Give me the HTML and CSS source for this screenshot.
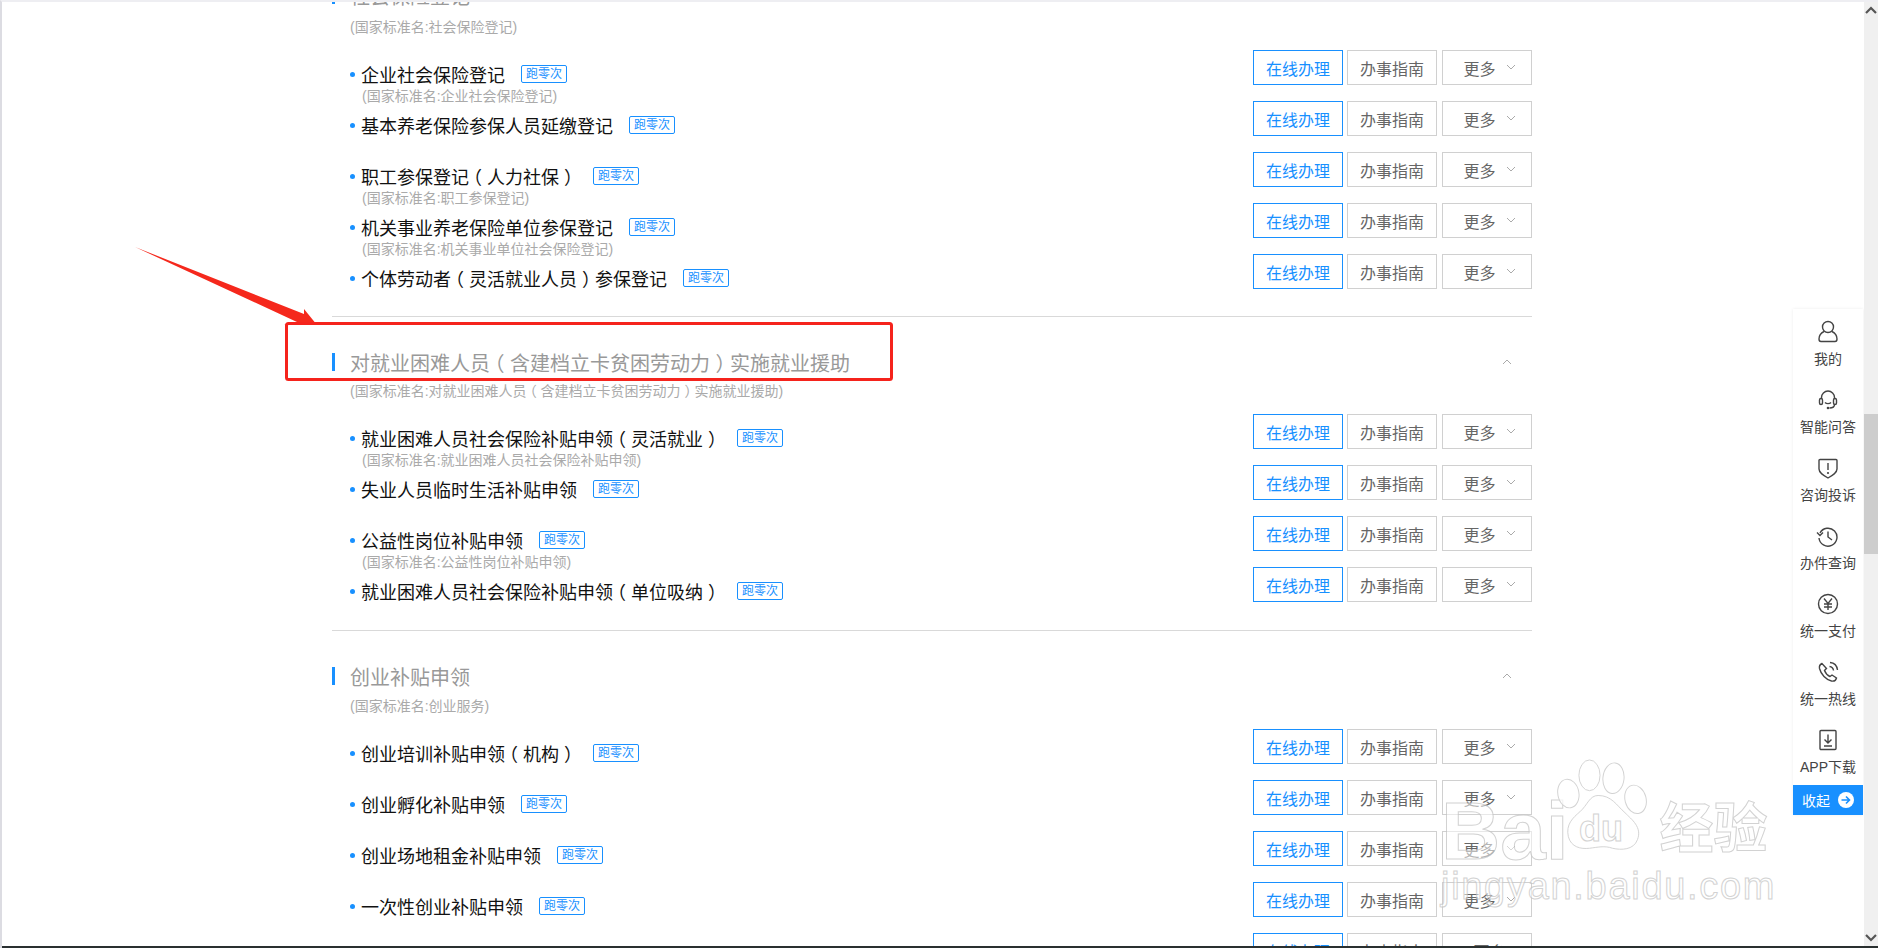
FILE: index.html
```html
<!DOCTYPE html>
<html lang="zh-CN">
<head>
    <meta charset="UTF-8">
    <title>办事服务</title>
    <link rel="stylesheet" href="styles.css">
</head>
<body>
    <div class="window">
        <div class="viewport">
            <div class="list">
                <!-- 社会保险登记 -->
                <section class="group first">
                    <div class="group-head"><h2>社会保险登记</h2></div>
                    <p class="group-sub">(国家标准名:社会保险登记)</p>
                    <div class="row"><div class="row-text"><div class="row-name"><a>企业社会保险登记</a><span class="tag">跑零次</span></div><p class="row-sub">(国家标准名:企业社会保险登记)</p></div><div class="btns"><span class="btn primary">在线办理</span><span class="btn">办事指南</span><span class="btn more">更多<svg class="chev" viewBox="0 0 10 6"><path d="M1 1l4 4 4-4"/></svg></span></div></div>
                    <div class="row"><div class="row-text"><div class="row-name"><a>基本养老保险参保人员延缴登记</a><span class="tag">跑零次</span></div></div><div class="btns"><span class="btn primary">在线办理</span><span class="btn">办事指南</span><span class="btn more">更多<svg class="chev" viewBox="0 0 10 6"><path d="M1 1l4 4 4-4"/></svg></span></div></div>
                    <div class="row"><div class="row-text"><div class="row-name"><a>职工参保登记<i class="par-l">（</i>人力社保<i class="par-r">）</i></a><span class="tag">跑零次</span></div><p class="row-sub">(国家标准名:职工参保登记)</p></div><div class="btns"><span class="btn primary">在线办理</span><span class="btn">办事指南</span><span class="btn more">更多<svg class="chev" viewBox="0 0 10 6"><path d="M1 1l4 4 4-4"/></svg></span></div></div>
                    <div class="row"><div class="row-text"><div class="row-name"><a>机关事业养老保险单位参保登记</a><span class="tag">跑零次</span></div><p class="row-sub">(国家标准名:机关事业单位社会保险登记)</p></div><div class="btns"><span class="btn primary">在线办理</span><span class="btn">办事指南</span><span class="btn more">更多<svg class="chev" viewBox="0 0 10 6"><path d="M1 1l4 4 4-4"/></svg></span></div></div>
                    <div class="row"><div class="row-text"><div class="row-name"><a>个体劳动者<i class="par-l">（</i>灵活就业人员<i class="par-r">）</i>参保登记</a><span class="tag">跑零次</span></div></div><div class="btns"><span class="btn primary">在线办理</span><span class="btn">办事指南</span><span class="btn more">更多<svg class="chev" viewBox="0 0 10 6"><path d="M1 1l4 4 4-4"/></svg></span></div></div>
                </section>

                <!-- 就业援助 -->
                <section class="group">
                    <div class="group-head"><h2>对就业困难人员<i class="par-l">（</i>含建档立卡贫困劳动力<i class="par-r">）</i>实施就业援助</h2><svg class="fold" viewBox="0 0 10 6"><path d="M1 5l4-4 4 4"/></svg></div>
                    <p class="group-sub">(国家标准名:对就业困难人员<i class="par-l">（</i>含建档立卡贫困劳动力<i class="par-r">）</i>实施就业援助)</p>
                    <div class="row"><div class="row-text"><div class="row-name"><a>就业困难人员社会保险补贴申领<i class="par-l">（</i>灵活就业<i class="par-r">）</i></a><span class="tag">跑零次</span></div><p class="row-sub">(国家标准名:就业困难人员社会保险补贴申领)</p></div><div class="btns"><span class="btn primary">在线办理</span><span class="btn">办事指南</span><span class="btn more">更多<svg class="chev" viewBox="0 0 10 6"><path d="M1 1l4 4 4-4"/></svg></span></div></div>
                    <div class="row"><div class="row-text"><div class="row-name"><a>失业人员临时生活补贴申领</a><span class="tag">跑零次</span></div></div><div class="btns"><span class="btn primary">在线办理</span><span class="btn">办事指南</span><span class="btn more">更多<svg class="chev" viewBox="0 0 10 6"><path d="M1 1l4 4 4-4"/></svg></span></div></div>
                    <div class="row"><div class="row-text"><div class="row-name"><a>公益性岗位补贴申领</a><span class="tag">跑零次</span></div><p class="row-sub">(国家标准名:公益性岗位补贴申领)</p></div><div class="btns"><span class="btn primary">在线办理</span><span class="btn">办事指南</span><span class="btn more">更多<svg class="chev" viewBox="0 0 10 6"><path d="M1 1l4 4 4-4"/></svg></span></div></div>
                    <div class="row"><div class="row-text"><div class="row-name"><a>就业困难人员社会保险补贴申领<i class="par-l">（</i>单位吸纳<i class="par-r">）</i></a><span class="tag">跑零次</span></div></div><div class="btns"><span class="btn primary">在线办理</span><span class="btn">办事指南</span><span class="btn more">更多<svg class="chev" viewBox="0 0 10 6"><path d="M1 1l4 4 4-4"/></svg></span></div></div>
                </section>

                <!-- 创业补贴申领 -->
                <section class="group">
                    <div class="group-head"><h2>创业补贴申领</h2><svg class="fold" viewBox="0 0 10 6"><path d="M1 5l4-4 4 4"/></svg></div>
                    <p class="group-sub">(国家标准名:创业服务)</p>
                    <div class="row"><div class="row-text"><div class="row-name"><a>创业培训补贴申领<i class="par-l">（</i>机构<i class="par-r">）</i></a><span class="tag">跑零次</span></div></div><div class="btns"><span class="btn primary">在线办理</span><span class="btn">办事指南</span><span class="btn more">更多<svg class="chev" viewBox="0 0 10 6"><path d="M1 1l4 4 4-4"/></svg></span></div></div>
                    <div class="row"><div class="row-text"><div class="row-name"><a>创业孵化补贴申领</a><span class="tag">跑零次</span></div></div><div class="btns"><span class="btn primary">在线办理</span><span class="btn">办事指南</span><span class="btn more">更多<svg class="chev" viewBox="0 0 10 6"><path d="M1 1l4 4 4-4"/></svg></span></div></div>
                    <div class="row"><div class="row-text"><div class="row-name"><a>创业场地租金补贴申领</a><span class="tag">跑零次</span></div></div><div class="btns"><span class="btn primary">在线办理</span><span class="btn">办事指南</span><span class="btn more">更多<svg class="chev" viewBox="0 0 10 6"><path d="M1 1l4 4 4-4"/></svg></span></div></div>
                    <div class="row"><div class="row-text"><div class="row-name"><a>一次性创业补贴申领</a><span class="tag">跑零次</span></div></div><div class="btns"><span class="btn primary">在线办理</span><span class="btn">办事指南</span><span class="btn more">更多<svg class="chev" viewBox="0 0 10 6"><path d="M1 1l4 4 4-4"/></svg></span></div></div>
                    <div class="row"><div class="row-text"><div class="row-name nobullet"></div></div><div class="btns"><span class="btn primary">在线办理</span><span class="btn">办事指南</span><span class="btn more">更多</span></div></div>
                </section>
            </div>

            <!-- 右侧悬浮栏 -->
            <aside class="side">
                <div class="side-item">
                    <svg viewBox="0 0 24 24"><circle cx="12" cy="7" r="5.500"/><path d="M8 11.500C5 13 3 15.500 3 19c0 1.500.8 2.500 2 2.500h14c1.200 0 2-1 2-2.500 0-3.500-2-6-5-7.500"/></svg>
                    <span>我的</span>
                </div>
                <div class="side-item">
                    <svg viewBox="0 0 24 24"><path d="M5.500 11V9.500a6.500 6.500 0 0 1 13 0V11"/><rect x="3.500" y="10.500" width="3" height="6" rx="1.500"/><rect x="17.500" y="10.500" width="3" height="6" rx="1.500"/><path d="M9 14.500c1.500 1.500 4.500 1.500 6 0"/><path d="M18.500 16.500c0 2-2 3.500-5 3.500"/><circle class="dot" cx="12" cy="20" r="1.300"/></svg>
                    <span>智能问答</span>
                </div>
                <div class="side-item">
                    <svg viewBox="0 0 24 24"><path d="M4 3.500c5 0 11 0 16 0 .5 0 1 .4 1 1V13c0 4-4.500 6.500-9 9-4.500-2.500-9-5-9-9V4.500c0-.6.500-1 1-1z"/><path d="M12 7v7"/><circle class="dot" cx="12" cy="17" r="1.100"/></svg>
                    <span>咨询投诉</span>
                </div>
                <div class="side-item">
                    <svg viewBox="0 0 24 24"><path d="M4 9a9 9 0 1 1-1 5"/><path d="M1 8.500l3 3 3-3"/><path d="M12 7.500V13l4 3"/></svg>
                    <span>办件查询</span>
                </div>
                <div class="side-item">
                    <svg viewBox="0 0 24 24"><circle cx="12" cy="12" r="9.500"/><path d="M8 6.500l4 5 4-5M12 11.500V18M8 12h8M8 15h8"/></svg>
                    <span>统一支付</span>
                </div>
                <div class="side-item">
                    <svg viewBox="0 0 24 24"><path d="M6 3.500c-2 1-3 2.500-2.500 5C5 14.500 10 19.500 15.500 21c2.500.5 4.500-1 5-3l-4.500-3-2 1.500c-2.500-1-4.500-3.500-5.500-6l2-2z"/><path d="M13.500 6.500c2.200.3 3.700 1.800 4 4M14 2.500c4 .3 7 3.300 7.500 7.500"/></svg>
                    <span>统一热线</span>
                </div>
                <div class="side-item">
                    <svg viewBox="0 0 24 24"><rect x="4" y="2.500" width="16" height="19" rx="1"/><path d="M12 6.500v8M8.500 11.500l3.500 3.500 3.500-3.500M8 18h8"/></svg>
                    <span>APP下载</span>
                </div>
                <div class="side-fold">
                    <span>收起</span>
                    <svg viewBox="0 0 16 16"><circle cx="8" cy="8" r="8"/><path d="M3.500 8h8M8 4.500L11.500 8 8 11.500"/></svg>
                </div>
            </aside>

            <!-- 红色标注 -->
            <svg class="mark" viewBox="0 0 900 400">
                <polygon points="135,247 304,314 304,309 317,325 284,325 297,322"/>
                <rect x="286.500" y="323.500" width="605" height="56"/>
            </svg>

            <!-- 水印 -->
            <div class="watermark">
                <div class="wm-top">
                    <span class="wm-bai">Bai</span>
                    <svg class="wm-paw" viewBox="0 0 100 100"><ellipse cx="16" cy="36" rx="11" ry="15" transform="rotate(-10 16 36)"/><ellipse cx="38" cy="17" rx="11" ry="16"/><ellipse cx="63" cy="20" rx="11" ry="16" transform="rotate(6 63 20)"/><ellipse cx="86" cy="42" rx="11" ry="15" transform="rotate(-15 86 42)"/><path d="M47 38c-9 0-11 10-19 17-7 6-15 13-12 26 3 11 13 13 22 12 8-1 16-3 24 0 9 2 22 2 26-9 5-13-6-21-13-28-9-8-14-18-28-18z"/></svg>
                    <span class="wm-du">du</span>
                    <span class="wm-cn">经验</span>
                </div>
                <div class="wm-url">jingyan.baidu.com</div>
            </div>
        </div>

        <!-- 滚动条 -->
        <div class="scrollbar">
            <svg class="sb-arrow" viewBox="0 0 12 8"><path d="M1 7l5-5 5 5"/></svg>
            <div class="sb-track"><div class="sb-thumb"></div></div>
            <svg class="sb-arrow" viewBox="0 0 12 8"><path d="M1 1l5 5 5-5"/></svg>
        </div>
    </div>
    <div class="taskline"></div>
</body>
</html>
```

FILE: styles.css
```css
/* General Reset */
* {
    margin: 0;
    padding: 0;
    box-sizing: border-box;
}

html, body {
    height: 948px;
    overflow: hidden;
}

body {
    font-family: "Liberation Sans", "Noto Sans CJK SC", sans-serif;
    background: #fff;
    color: #333;
    display: flex;
    flex-direction: column;
    border-top: 2px solid #eeeef2;
    border-left: 2px solid #dcdce2;
}

.window {
    flex: 1;
    min-height: 0;
    display: flex;
}

.taskline {
    height: 2px;
    background: #2a3030;
}

.viewport {
    flex: 1;
    position: relative;
    overflow: hidden;
}

/* Full-width brackets sit centred in their em box */
.par-l, .par-r {
    font-style: normal;
}

.par-l {
    margin-left: -0.28em;
    margin-right: 0.28em;
}

.par-r {
    margin-left: 0.28em;
    margin-right: -0.28em;
}

/* List */
.list {
    width: 1200px;
    margin-left: 330px;
    margin-top: -22px;
}

.group {
    border-top: 1px solid #d9d9d9;
    padding-top: 30px;
    height: 314px;
}

.group.first {
    border-top: none;
    padding-top: 0;
    height: 336px;
}

.group + .group + .group {
    height: auto;
}

.group-head {
    height: 30px;
    display: flex;
    align-items: center;
    position: relative;
    padding-left: 18px;
}

.group-head::before {
    content: "";
    position: absolute;
    left: 0;
    top: 6px;
    width: 3px;
    height: 18px;
    background: #1890ff;
}

.group-head h2 {
    font-size: 20px;
    font-weight: 400;
    color: #999;
    flex: 1;
}

.fold {
    width: 10px;
    height: 6px;
    margin-right: 20px;
    fill: none;
    stroke: #aaa;
    stroke-width: 1;
}

.group-sub {
    font-size: 14px;
    line-height: 18px;
    color: #aaa;
    padding-left: 18px;
    margin-top: 8px;
    margin-bottom: 14px;
}

.group + .group .group-sub {
    margin-top: 5px;
}

.group + .group + .group .group-sub {
    margin-top: 6px;
}

.row {
    height: 51px;
    display: flex;
    justify-content: space-between;
}

.row-text {
    padding-left: 18px;
}

.row-name {
    display: flex;
    align-items: center;
    height: 24px;
    margin-top: 12px;
    position: relative;
    padding-left: 11px;
}

.row-name::before {
    content: "";
    position: absolute;
    left: 0;
    top: 10px;
    width: 5px;
    height: 5px;
    border-radius: 50%;
    background: #1890ff;
}

.row-name.nobullet::before {
    display: none;
}

.row-name a {
    font-size: 18px;
    color: #111;
    white-space: nowrap;
}

.tag {
    margin-left: 16px;
    width: 46px;
    height: 18px;
    border: 1px solid #1890ff;
    border-radius: 2px;
    font-size: 12px;
    line-height: 16px;
    text-align: center;
    color: #1890ff;
}

.row-sub {
    font-size: 14px;
    line-height: 16px;
    color: #aaa;
    padding-left: 12px;
    margin-top: 2px;
}

/* Buttons */
.btns {
    display: flex;
    gap: 5px;
    height: 35px;
}

.btn {
    width: 90px;
    height: 35px;
    border: 1px solid #d0d0d0;
    font-size: 16px;
    line-height: 37px;
    text-align: center;
    color: #666;
}

.btn.primary {
    border-color: #1890ff;
    color: #1890ff;
    background: #fff;
    margin-right: -1px;
}

.btn.more {
    display: flex;
    justify-content: center;
    align-items: center;
    gap: 10px;
    padding: 3px 0 0 5px;
}

.chev {
    width: 10px;
    height: 6px;
    fill: none;
    stroke: #aaa;
    stroke-width: 1;
    margin-top: -4px;
}

/* Side bar */
.side {
    position: absolute;
    right: 1px;
    top: 307px;
    width: 70px;
    background: #fff;
    box-shadow: 0 0 3px rgba(0, 0, 0, 0.08);
    display: flex;
    flex-direction: column;
}

.side-item {
    height: 68px;
    display: flex;
    flex-direction: column;
    align-items: center;
    padding-top: 11px;
    font-size: 14px;
    color: #444;
}

.side-item svg {
    width: 24px;
    height: 24px;
    margin-bottom: 4px;
    fill: none;
    stroke: #444;
    stroke-width: 1.4;
}

.side-item svg .dot {
    fill: #444;
    stroke: none;
}

.side-fold {
    height: 30px;
    background: #1890ff;
    color: #fff;
    font-size: 14px;
    display: flex;
    align-items: center;
    justify-content: center;
    gap: 8px;
}

.side-fold svg {
    width: 16px;
    height: 16px;
    fill: #fff;
}

.side-fold svg path {
    fill: none;
    stroke: #1890ff;
    stroke-width: 1.6;
}

/* Red marks */
.mark {
    position: absolute;
    left: -2px;
    top: -2px;
    width: 900px;
    height: 400px;
    pointer-events: none;
}

.mark polygon {
    fill: #f5281c;
}

.mark rect {
    fill: none;
    stroke: #f5231c;
    stroke-width: 3;
    rx: 2px;
}

/* Watermark */
.watermark {
    position: absolute;
    left: 1439px;
    top: 744px;
    width: 345px;
    opacity: 0.75;
    pointer-events: none;
}

.wm-top {
    display: flex;
    align-items: flex-end;
    height: 116px;
}

.wm-bai, .wm-du, .wm-cn, .wm-url {
    color: rgba(255, 255, 255, 0.7);
    -webkit-text-stroke: 1px #c4c4c4;
}

.wm-bai {
    font-size: 82px;
    font-weight: 700;
    line-height: 62px;
}

.wm-paw {
    width: 96px;
    height: 110px;
    margin-left: -16px;
    fill: rgba(255, 255, 255, 0.7);
    stroke: #c4c4c4;
    stroke-width: 1;
}

.wm-du {
    position: absolute;
    left: 138px;
    top: 62px;
    font-size: 36px;
    font-weight: 700;
}

.wm-cn {
    font-size: 54px;
    font-weight: 700;
    line-height: 66px;
    margin-left: 11px;
}

.wm-url {
    font-size: 38px;
    line-height: 40px;
    margin-top: 4px;
    letter-spacing: 1.7px;
    white-space: nowrap;
}

/* Scrollbar */
.scrollbar {
    width: 14px;
    background: #f0f0f0;
    display: flex;
    flex-direction: column;
    align-items: center;
}

.sb-arrow {
    width: 12px;
    height: 8px;
    margin: 4px 0;
    flex-shrink: 0;
    fill: none;
    stroke: #555;
    stroke-width: 2.2;
}

.sb-track {
    flex: 1;
    width: 100%;
    padding-top: 396px;
}

.sb-thumb {
    height: 140px;
    background: #cdcdcd;
}
```
